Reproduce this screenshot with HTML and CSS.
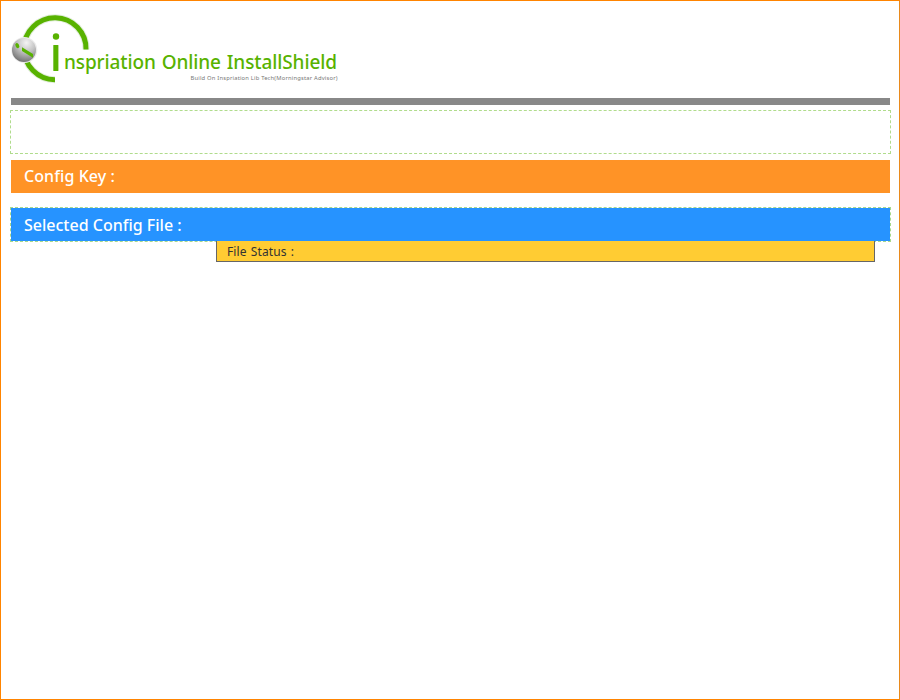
FILE: index.html
```html
<!DOCTYPE html>
<html lang="en">
<head>
<meta charset="utf-8">
<title>Inspriation Online InstallShield</title>
<link rel="stylesheet" href="styles.css">
</head>
<body>
<main class="window">
  <header class="brand">
    <svg class="logo" width="340" height="86" viewBox="0 0 340 86" role="img" aria-label="Inspriation Online InstallShield">
      <defs>
        <radialGradient id="ball" cx="0.6" cy="0.2" r="0.85">
          <stop offset="0" stop-color="#f4f4f4"/>
          <stop offset="0.45" stop-color="#c4c4c4"/>
          <stop offset="1" stop-color="#6c6c6c"/>
        </radialGradient>
      </defs>
      <path class="ring-halo" d="M55 79.7A31 31 0 1 1 86 49.5"/>
      <path class="ring" d="M55 79.7A31 31 0 1 1 86 49.5"/>
      <circle class="ball-edge" cx="24.3" cy="50" r="13"/>
      <circle cx="24" cy="50" r="12" fill="url(#ball)"/>
      <ellipse class="green" cx="17.3" cy="45.6" rx="1.8" ry="2.7" transform="rotate(-25 17.3 45.6)"/>
      <path class="green" d="M22 47.3L33 54V57.7L22 51Z"/>
      <circle class="green" cx="56" cy="36.5" r="3.2"/>
      <rect class="green" x="53.3" y="45" width="5.1" height="26" rx=".6"/>
      <text class="name" x="64" y="69" textLength="273" lengthAdjust="spacing">nspriation Online InstallShield</text>
      <text class="tagline" x="190.5" y="80" textLength="147" lengthAdjust="spacing">Build On Inspriation Lib Tech(Morningstar Advisor)</text>
    </svg>
  </header>
  <div class="rule"></div>
  <section class="message"></section>
  <section class="bar key"><span class="key-label">Config Key :</span></section>
  <section class="bar file"><span class="file-label">Selected Config File :</span></section>
  <section class="status"><span>File Status :</span></section>
</main>
</body>
</html>
```
FILE: styles.css
```css
* { box-sizing: border-box; }
body { margin: 0; background: #fff; font-family: "Noto Sans", "Open Sans", sans-serif; }
.window { height: 700px; border: 1px solid #ff8400; border-right-color: #e98a1c; display: flex; flex-direction: column; }
.brand { height: 98px; margin: -1px 0 0 -1px; flex: none; }
.logo { display: block; }
.ring { fill: none; stroke: #58b200; stroke-width: 5; }
.ring-halo { fill: none; stroke: #e2eedb; stroke-width: 7; }
.green { fill: #58b200; }
.ball-edge { fill: #ececec; }
.name { font-size: 19px; font-weight: 500; fill: #58b200; word-spacing: 1px; }
.tagline { font-size: 5.8px; fill: #777; }
.rule { height: 7px; margin: 0 9px 0 10px; background: #888; flex: none; }
.message { height: 44px; margin: 5px 8px 0 9px; border: 1px dashed #b0dc8c; flex: none; }
.bar { color: #fff; font-size: 16px; font-weight: 500; padding-left: 13px; flex: none; white-space: pre; }
.key { height: 33px; margin: 6px 9px 0 10px; background: #ff9326; line-height: 32px; }
.key-label { letter-spacing: .08px; }
.file { height: 35px; margin: 14px 8px 0 9px; border: 1px dashed #a6d98c; background: #2693ff; background-clip: padding-box; line-height: 34px; }
.status { height: 21px; margin: -1px 24px 0 215px; border: 1px solid #666; border-top: 0; background: #ffcc33; color: #333; font-size: 12px; letter-spacing: .1px; word-spacing: 1px; line-height: 21px; padding-left: 10px; flex: none; }
```
